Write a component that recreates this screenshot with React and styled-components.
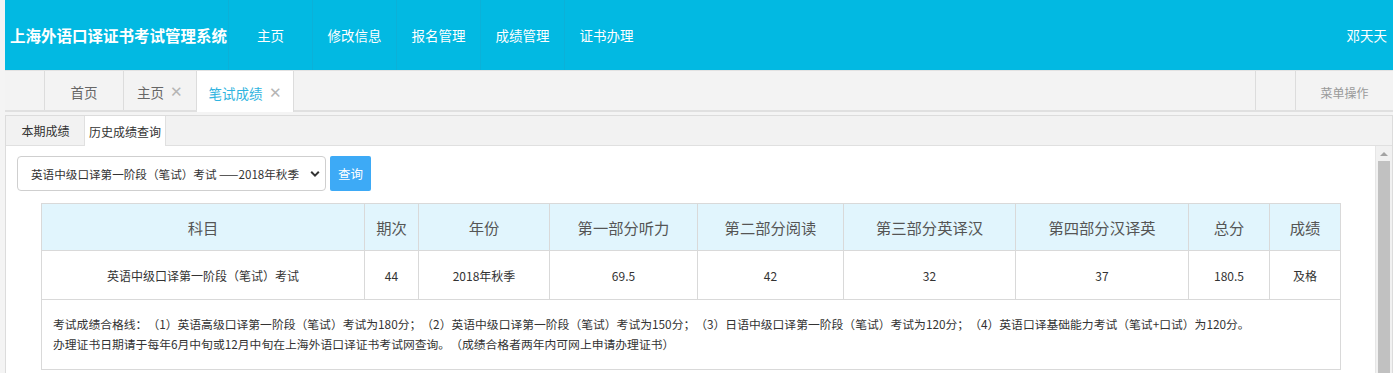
import React from 'react'
import styled, { createGlobalStyle } from 'styled-components'

const GlobalStyle = createGlobalStyle`
  html, body {
    margin: 0;
    padding: 0;
    background: #f4f4f4;
    font-family: "Noto Sans CJK SC", "Liberation Sans", sans-serif;
    overflow: hidden;
  }
  * {
    box-sizing: border-box;
    text-spacing-trim: space-all;
  }
`

const Page = styled.div`
  padding-left: 5px;
  width: 1393px;
  height: 373px;
`

const Header = styled.div`
  height: 70px;
  background: #02b9e2;
  display: flex;
  align-items: stretch;
  color: #fff;
`

const Title = styled.div`
  width: 223px;
  padding-left: 5px;
  display: flex;
  align-items: center;
  font-size: 15.5px;
  font-weight: 700;
  white-space: nowrap;
`

const NavItem = styled.div`
  width: 84px;
  border-left: 1px solid #0bb1d8;
  display: flex;
  align-items: center;
  justify-content: center;
  font-size: 13.5px;
`

const User = styled.div`
  margin-left: auto;
  padding-right: 6px;
  display: flex;
  align-items: center;
  font-size: 13.5px;
`

const TabBar = styled.div`
  height: 42px;
  background: #f3f3f3;
  border-top: 1px solid #e2e2e2;
  border-bottom: 2px solid #e0e0e0;
  display: flex;
`

const Tab = styled.div`
  width: ${p => p.w}px;
  border-right: ${p => (p.last ? 'none' : '1px solid #dcdcdc')};
  background: ${p => (p.active ? '#fff' : 'transparent')};
  color: ${p => (p.active ? '#2fb4e0' : p.muted ? '#999' : '#666')};
  font-size: ${p => (p.small ? 12 : 13.5)}px;
  display: flex;
  align-items: center;
  justify-content: center;
  gap: 6px;
  padding-top: 3px;
  margin-bottom: ${p => (p.active ? '-2px' : '0')};
`

const Close = styled.span`
  color: #b5b5b5;
  font-size: 15px;
  line-height: 1;
  margin-top: -3px;
`

const Spacer = styled.div`
  flex: 1;
  border-right: 1px solid #dcdcdc;
`

const Panel = styled.div`
  margin-top: 3px;
  border: 1px solid #dcdcdc;
  border-bottom: none;
  background: #fff;
  height: 258px;
  display: flex;
  flex-direction: column;
`

const SubTabBar = styled.div`
  height: 30px;
  background: #f2f2f2;
  border-bottom: 1px solid #e0e0e0;
  display: flex;
  padding-left: 1px;
`

const SubTab = styled.div`
  width: ${p => p.w}px;
  font-size: 12px;
  color: #333;
  display: flex;
  align-items: center;
  justify-content: center;
  background: ${p => (p.active ? '#fff' : 'transparent')};
  border-left: ${p => (p.active ? '1px solid #e0e0e0' : 'none')};
  border-right: ${p => (p.active ? '1px solid #e0e0e0' : 'none')};
  margin-bottom: ${p => (p.active ? '-1px' : '0')};
`

const BodyRow = styled.div`
  flex: 1;
  display: flex;
  min-height: 0;
`

const Content = styled.div`
  flex: 1;
  padding: 10px 0 0 11px;
`

const QueryRow = styled.div`
  display: flex;
  gap: 4px;
`

const SelectWrap = styled.div`
  position: relative;
  width: 309px;
  height: 35px;
`

const Select = styled.select`
  appearance: none;
  width: 100%;
  height: 100%;
  border: 1px solid #cfcfcf;
  border-radius: 4px;
  background: #fff;
  padding: 0 22px 0 13px;
  font-family: inherit;
  font-size: 11.6px;
  color: #333;
  outline: none;
`

const Chevron = styled.svg`
  position: absolute;
  right: 6px;
  top: 14px;
  pointer-events: none;
`

const Button = styled.button`
  width: 41px;
  height: 35px;
  border: none;
  border-radius: 2px;
  background: #3daaf6;
  color: #fff;
  font-family: inherit;
  font-size: 12.5px;
  padding: 0;
`

const Table = styled.table`
  margin: 12px 0 0 24px;
  width: 1299px;
  border-collapse: collapse;
  table-layout: fixed;
  color: #333;
`

const Th = styled.th`
  height: 47px;
  background: #e1f5fd;
  border: 1px solid #d9d9d9;
  font-weight: 400;
  font-size: 15.3px;
  color: #555;
  text-align: center;
  padding: 0;
`

const Td = styled.td`
  height: 49px;
  border: 1px solid #d9d9d9;
  font-size: 12px;
  text-align: center;
  padding: 0;
`

const NoteCell = styled.td`
  border: 1px solid #d9d9d9;
  font-size: 11.8px;
  line-height: 20px;
  color: #333;
  padding: 14px 11px 15px;
  text-align: left;
`

const Scrollbar = styled.div`
  width: 17px;
  background: #f1f1f1;
  border-left: 1px solid #e6e6e6;
  display: flex;
  flex-direction: column;
  align-items: center;
`

const Arrow = styled.div`
  width: 0;
  height: 0;
  margin: 6px 0 5px;
  border-left: 4px solid transparent;
  border-right: 4px solid transparent;
  border-bottom: 4px solid #a3a3a3;
`

const Thumb = styled.div`
  width: 12px;
  flex: 1;
  background: #c1c1c1;
`

const cols = [323, 54, 131, 148, 146, 172, 173, 81, 71]
const heads = ['科目', '期次', '年份', '第一部分听力', '第二部分阅读', '第三部分英译汉', '第四部分汉译英', '总分', '成绩']
const row = ['英语中级口译第一阶段（笔试）考试', '44', '2018年秋季', '69.5', '42', '32', '37', '180.5', '及格']

export default function App() {
  return (
    <Page>
      <GlobalStyle />
      <Header>
        <Title>上海外语口译证书考试管理系统</Title>
        <NavItem>主页</NavItem>
        <NavItem>修改信息</NavItem>
        <NavItem>报名管理</NavItem>
        <NavItem>成绩管理</NavItem>
        <NavItem>证书办理</NavItem>
        <User>邓天天</User>
      </Header>
      <TabBar>
        <Tab w={40} />
        <Tab w={79}>首页</Tab>
        <Tab w={73}>主页<Close>✕</Close></Tab>
        <Tab w={97} active>笔试成绩<Close>✕</Close></Tab>
        <Spacer />
        <Tab w={40} />
        <Tab w={97} muted small last>菜单操作</Tab>
      </TabBar>
      <Panel>
        <SubTabBar>
          <SubTab w={77}>本期成绩</SubTab>
          <SubTab w={82} active>历史成绩查询</SubTab>
        </SubTabBar>
        <BodyRow>
          <Content>
            <QueryRow>
              <SelectWrap>
                <Select defaultValue="a">
                  <option value="a">英语中级口译第一阶段（笔试）考试 ——2018年秋季</option>
                </Select>
                <Chevron width="10" height="8" viewBox="0 0 10 8">
                  <path d="M1.2 1.8 L5 5.6 L8.8 1.8" fill="none" stroke="#333" strokeWidth="2" />
                </Chevron>
              </SelectWrap>
              <Button>查询</Button>
            </QueryRow>
            <Table>
              <colgroup>
                {cols.map((w, i) => <col key={i} style={{ width: w }} />)}
              </colgroup>
              <thead>
                <tr>{heads.map(h => <Th key={h}>{h}</Th>)}</tr>
              </thead>
              <tbody>
                <tr>{row.map((c, i) => <Td key={i}>{c}</Td>)}</tr>
                <tr>
                  <NoteCell colSpan={9}>
                    考试成绩合格线：（1）英语高级口译第一阶段（笔试）考试为180分；（2）英语中级口译第一阶段（笔试）考试为150分；（3）日语中级口译第一阶段（笔试）考试为120分；（4）英语口译基础能力考试（笔试+口试）为120分。
                    <br />
                    办理证书日期请于每年6月中旬或12月中旬在上海外语口译证书考试网查询。（成绩合格者两年内可网上申请办理证书）
                  </NoteCell>
                </tr>
              </tbody>
            </Table>
          </Content>
          <Scrollbar>
            <Arrow />
            <Thumb />
          </Scrollbar>
        </BodyRow>
      </Panel>
    </Page>
  )
}
